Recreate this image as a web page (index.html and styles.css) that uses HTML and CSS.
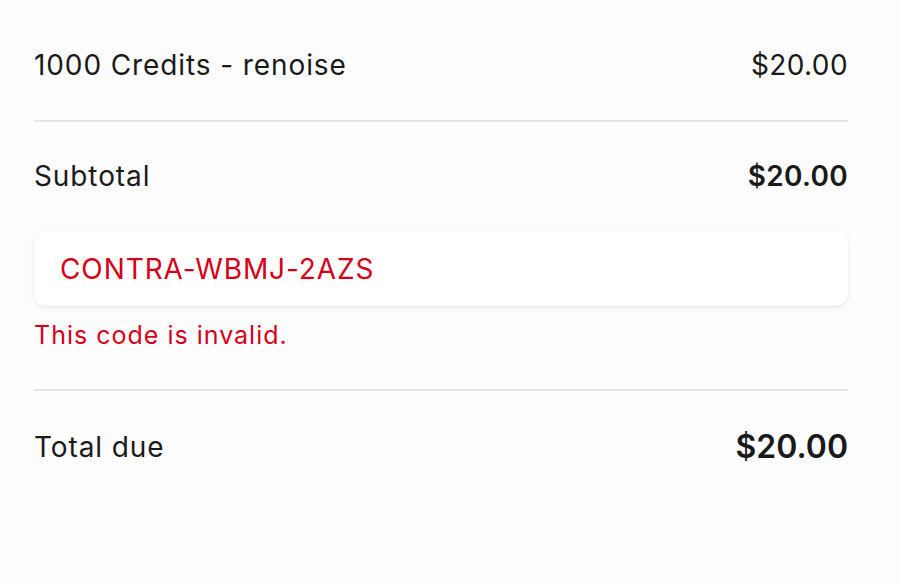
FILE: index.html
```html
<!DOCTYPE html>
<html lang="en">
<head>
<meta charset="utf-8">
<title>Order summary</title>
<link rel="stylesheet" href="styles.css">
</head>
<body>
<main class="summary">
  <div class="row item">
    <span class="label">1000 Credits - renoise</span>
    <span class="amount">$20.00</span>
  </div>
  <hr class="divider">
  <div class="row subtotal">
    <span class="label">Subtotal</span>
    <span class="amount strong">$20.00</span>
  </div>
  <div class="promo">
    <input class="promo-input" type="text" value="CONTRA-WBMJ-2AZS" aria-invalid="true">
  </div>
  <p class="error">This code is invalid.</p>
  <hr class="divider">
  <div class="row total">
    <span class="label">Total due</span>
    <span class="amount strong big">$20.00</span>
  </div>
</main>
</body>
</html>
```
FILE: styles.css
```css
html, body {
  margin: 0;
  padding: 0;
  background: #fefdfe;
}
body {
  font-family: Inter, "Noto Sans", "Liberation Sans", sans-serif;
  color: #1a1a1a;
}
.summary {
  width: 814px;
  padding: 48px 0 0 34px;
}
.row {
  display: flex;
  justify-content: space-between;
  align-items: center;
  font-size: 28px;
  line-height: 34px;
}
.label {
  letter-spacing: 0.9px;
}
.amount {
  letter-spacing: 0.4px;
}
.strong {
  font-weight: 600;
  letter-spacing: 0.3px;
}
.big {
  font-size: 32px;
  letter-spacing: 0;
}
.total {
  line-height: 38px;
}
.divider {
  border: 0;
  height: 2px;
  background: #e6e6e6;
  margin: 38px 0 37px;
}
.promo {
  margin-top: 39px;
  border-radius: 12px;
  background: #ffffff;
  box-shadow: 0 1px 2px rgba(0,0,0,0.07), 0 2px 7px rgba(0,0,0,0.05);
}
.promo-input {
  display: block;
  box-sizing: border-box;
  width: 100%;
  height: 74px;
  padding: 0 26px;
  border: 0;
  background: transparent;
  font-family: inherit;
  font-size: 28px;
  letter-spacing: 0.9px;
  color: #d4001a;
  outline: none;
}
.error {
  margin: 12px 0 0;
  font-size: 25px;
  line-height: 34px;
  letter-spacing: 1px;
  color: #d4001a;
}
.error + .divider {
  margin-top: 37px;
}
```
